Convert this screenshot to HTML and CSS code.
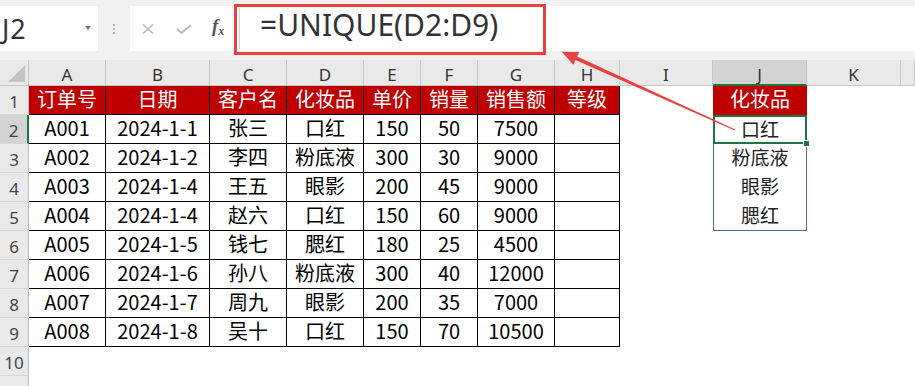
FILE: index.html
```html
<!DOCTYPE html>
<html lang="zh-CN">
<head>
  <meta charset="UTF-8" />
  <title>UNIQUE 函数</title>
  <meta name="viewport" content="width=device-width, initial-scale=1.0" />
  <link rel="stylesheet" href="styles.css">
</head>
<body>
  <!-- 编辑栏 -->
  <div class="formula-bar">
    <div class="name-box">
      <span class="ref">J2</span>
      <span class="caret"></span>
    </div>
    <div class="grip"><i></i><i></i><i></i></div>
    <div class="tools">
      <svg class="cancel" width="12" height="10" viewBox="0 0 12 10"><path d="M1 0.5 L11 9.5 M11 0.5 L1 9.5" stroke="#b9b9b9" stroke-width="1.6" fill="none"/></svg>
      <svg class="enter" width="16" height="10" viewBox="0 0 16 10"><path d="M1 5 L5.5 9 L15 1" stroke="#b9b9b9" stroke-width="2" fill="none"/></svg>
      <span class="fx">f<sub>x</sub></span>
    </div>
    <div class="input">
      <span class="split"></span>
      <span class="text">=UNIQUE(D2:D9)</span>
    </div>
    <!-- 标注框 -->
    <div class="mark"></div>
  </div>

  <!-- 工作表 -->
  <div class="sheet">
    <div class="corner"></div>
    <div class="ch">A</div><div class="ch">B</div><div class="ch">C</div><div class="ch">D</div>
    <div class="ch">E</div><div class="ch">F</div><div class="ch">G</div><div class="ch">H</div>
    <div class="ch">I</div><div class="ch on">J</div><div class="ch">K</div><div class="ch"></div>

    <div class="rh">1</div>
    <div class="th">订单号</div><div class="th">日期</div><div class="th">客户名</div><div class="th">化妆品</div>
    <div class="th">单价</div><div class="th">销量</div><div class="th">销售额</div><div class="th">等级</div>
    <div></div><div class="jh">化妆品</div><div></div><div></div>

    <div class="rh on">2</div>
    <div class="td">A001</div><div class="td">2024-1-1</div><div class="td">张三</div><div class="td">口红</div>
    <div class="td">150</div><div class="td">50</div><div class="td">7500</div><div class="td"></div>
    <div></div><div class="spill sel">口红</div><div></div><div></div>

    <div class="rh">3</div>
    <div class="td">A002</div><div class="td">2024-1-2</div><div class="td">李四</div><div class="td">粉底液</div>
    <div class="td">300</div><div class="td">30</div><div class="td">9000</div><div class="td"></div>
    <div></div><div class="spill">粉底液</div><div></div><div></div>

    <div class="rh">4</div>
    <div class="td">A003</div><div class="td">2024-1-4</div><div class="td">王五</div><div class="td">眼影</div>
    <div class="td">200</div><div class="td">45</div><div class="td">9000</div><div class="td"></div>
    <div></div><div class="spill">眼影</div><div></div><div></div>

    <div class="rh">5</div>
    <div class="td">A004</div><div class="td">2024-1-4</div><div class="td">赵六</div><div class="td">口红</div>
    <div class="td">150</div><div class="td">60</div><div class="td">9000</div><div class="td"></div>
    <div></div><div class="spill last">腮红</div><div></div><div></div>

    <div class="rh">6</div>
    <div class="td">A005</div><div class="td">2024-1-5</div><div class="td">钱七</div><div class="td">腮红</div>
    <div class="td">180</div><div class="td">25</div><div class="td">4500</div><div class="td"></div>
    <div></div><div></div><div></div><div></div>

    <div class="rh">7</div>
    <div class="td">A006</div><div class="td">2024-1-6</div><div class="td">孙八</div><div class="td">粉底液</div>
    <div class="td">300</div><div class="td">40</div><div class="td">12000</div><div class="td"></div>
    <div></div><div></div><div></div><div></div>

    <div class="rh">8</div>
    <div class="td">A007</div><div class="td">2024-1-7</div><div class="td">周九</div><div class="td">眼影</div>
    <div class="td">200</div><div class="td">35</div><div class="td">7000</div><div class="td"></div>
    <div></div><div></div><div></div><div></div>

    <div class="rh">9</div>
    <div class="td">A008</div><div class="td">2024-1-8</div><div class="td">吴十</div><div class="td">口红</div>
    <div class="td">150</div><div class="td">70</div><div class="td">10500</div><div class="td"></div>
    <div></div><div></div><div></div><div></div>

    <div class="rh">10</div>
    <div></div><div></div><div></div><div></div><div></div><div></div>
    <div></div><div></div><div></div><div></div><div></div><div></div>

    <div class="rh">11</div>
    <div></div><div></div><div></div><div></div><div></div><div></div>
    <div></div><div></div><div></div><div></div><div></div><div></div>
  </div>

  <!-- 红色箭头标注 -->
  <svg class="arrow" width="915" height="386" viewBox="0 0 915 386">
    <polygon fill="#e8413f" points="561.7,51.7 579.2,51.9 577.1,56.5 735.3,129.5 734.7,130.5 575.5,60.1 573.4,64.7"/>
  </svg>
</body>
</html>
```

FILE: styles.css
```css
/* 基础 */
body {
  margin: 0;
  width: 915px;
  height: 386px;
  overflow: hidden;
  position: relative;
  background: #fff;
  font-family: "Noto Sans CJK SC", sans-serif;
}

/* 编辑栏 */
.formula-bar {
  position: relative;
  height: 60px;
  box-sizing: border-box;
  padding-top: 6px;
  background: #f1f1f1;
  display: flex;
  align-items: flex-start;
}
.name-box {
  width: 98px;
  height: 45px;
  background: #fff;
  display: flex;
  align-items: center;
  justify-content: space-between;
  padding: 0 7px 0 2px;
  box-sizing: border-box;
}
.name-box .ref {
  font-family: "Noto Sans", sans-serif;
  font-size: 27px;
  letter-spacing: 1px;
  color: #333;
  line-height: 45px;
}
.caret {
  width: 0;
  height: 0;
  border-left: 3px solid transparent;
  border-right: 3px solid transparent;
  border-top: 4px solid #777;
  margin-top: -1px;
}
.grip {
  width: 32px;
  height: 45px;
  display: flex;
  flex-direction: column;
  align-items: center;
  justify-content: center;
  gap: 2px;
}
.grip i { width: 2px; height: 2px; background: #b5b5b5; }
.tools {
  width: 102px;
  height: 45px;
  background: #fff;
  display: flex;
  align-items: center;
  padding-left: 12px;
  box-sizing: border-box;
}
.tools .enter { margin-left: 22px; }
.fx {
  margin-left: 20px;
  font-family: "Liberation Serif", serif;
  font-style: italic;
  font-weight: bold;
  font-size: 19px;
  color: #555;
  margin-top: -4px;
}
.fx sub { font-size: 12px; vertical-align: -3px; }
.input {
  flex: 1;
  height: 45px;
  margin-left: 1px;
  background: #fff;
  display: flex;
  align-items: stretch;
}
.input .split {
  width: 6px;
  margin: 2px 0;
  border-right: 1px solid #d4d4d4;
}
.input .text {
  padding-left: 20px;
  font-family: "Noto Sans", sans-serif;
  font-size: 30px;
  line-height: 38px;
  color: #333;
}
.mark {
  position: absolute;
  left: 234px;
  top: 4px;
  width: 312px;
  height: 51px;
  box-sizing: border-box;
  border: 3px solid #e8413f;
}

/* 工作表 */
.sheet {
  display: grid;
  grid-template-columns: 29px 77px 104px 77px 77px 57px 57px 77px 65px 93px 94px 94px 1fr;
  grid-template-rows: 26px;
  grid-auto-rows: 29px;
  font-size: 20px;
}
.sheet > div {
  box-sizing: border-box;
  text-align: center;
  line-height: 26px;
  white-space: nowrap;
}
.corner {
  background: #e9e9e9;
  border-right: 1px solid #c6c6c6;
  border-bottom: 1px solid #c6c6c6;
  position: relative;
}
.corner::after {
  content: "";
  position: absolute;
  right: 3px;
  bottom: 3px;
  width: 17px;
  height: 17px;
  background: #c3c3c3;
  clip-path: polygon(100% 0, 100% 100%, 0 100%);
}
.sheet > .ch {
  background: #e9e9e9;
  border-right: 1px solid #c6c6c6;
  border-bottom: 1px solid #c6c6c6;
  font-family: "Noto Sans", sans-serif;
  font-size: 17px;
  color: #333;
  padding-top: 2px;
}
.sheet > .ch.on {
  background: #d3d3d3;
  border-bottom: 2px solid #217346;
}
.sheet > .rh {
  background: #e9e9e9;
  border-right: 1px solid #bdbdbd;
  border-bottom: 1px solid #d6d6d6;
  font-family: "Noto Sans", sans-serif;
  font-size: 17px;
  color: #444;
  padding-top: 3px;
}
.sheet > .rh.on {
  background: #d3d3d3;
  border-right: 2px solid #217346;
}
.th, .td {
  border-right: 1px solid #000;
  border-bottom: 1px solid #000;
}
.th { background: #c00000; color: #fff; }
.td { color: #000; }
.jh { background: #c00000; color: #fff; }

/* 溢出区域 J2:J5 */
.sheet > .spill {
  border-left: 1px solid #4a6db0;
  border-right: 1px solid #4a6db0;
  font-size: 19px;
  color: #222;
}
.sheet > .spill.last { border-bottom: 1px solid #4a6db0; }
.sheet > .sel {
  position: relative;
  border: 2px solid #217346;
  line-height: 24px;
}
.sel::after {
  content: "";
  position: absolute;
  right: -5px;
  bottom: -5px;
  width: 5px;
  height: 5px;
  background: #217346;
  border: 1px solid #fff;
}

.arrow {
  position: absolute;
  left: 0;
  top: 0;
  pointer-events: none;
}
```
